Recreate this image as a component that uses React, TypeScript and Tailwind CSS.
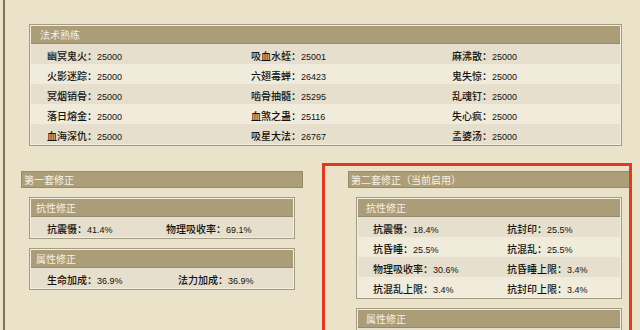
import React from "react";

const CJK = { fontFamily: '"Noto Sans CJK SC", "Liberation Sans", sans-serif' };
const NUM = { fontFamily: '"Liberation Sans", "Noto Sans CJK SC", sans-serif' };

type Cell = [string, string];

function Entry({ c }: { c: Cell }) {
  return (
    <span className="whitespace-nowrap text-[#14120e]">
      <span className="text-[10px] font-medium" style={CJK}>
        {c[0]}：
      </span>
      <span className="text-[9px]" style={NUM}>
        {c[1]}
      </span>
    </span>
  );
}

function Box({
  title,
  rows,
  titlePad,
  rowPad,
  colWidths,
}: {
  title: string;
  rows: Cell[][];
  titlePad: number;
  rowPad: number;
  colWidths: number[];
}) {
  return (
    <div className="border border-[#a19b84] bg-[#f3eee2] p-px">
      <div
        className="h-[18px] flex items-center bg-[#ac9d79] border-b border-[#94896d] text-[10px] text-[#f7f2e4]"
        style={{ ...CJK, paddingLeft: titlePad }}
      >
        {title}
      </div>
      {rows.map((r, i) => (
        <div
          key={i}
          className={`h-[20px] flex items-center ${i % 2 === 0 ? "bg-[#e7dfcd]" : "bg-[#f1ebdc]"}`}
          style={{ paddingLeft: rowPad }}
        >
          {r.map((c, j) => (
            <div key={j} className="shrink-0" style={{ width: colWidths[j] }}>
              <Entry c={c} />
            </div>
          ))}
        </div>
      ))}
    </div>
  );
}

function SectionHeader({ title }: { title: string }) {
  return (
    <div
      className="h-[17px] flex items-center pl-[2px] bg-[#ad9e7a] border border-[#978b6b] text-[10px] text-[#f7f2e4]"
      style={CJK}
    >
      {title}
    </div>
  );
}

export default function App() {
  const skills: Cell[][] = [
    [["幽冥鬼火", "25000"], ["吸血水蛭", "25001"], ["麻沸散", "25000"]],
    [["火影迷踪", "25000"], ["六翅毒蝉", "26423"], ["鬼失惊", "25000"]],
    [["冥烟销骨", "25000"], ["啮骨抽髓", "25295"], ["乱魂钉", "25000"]],
    [["落日熔金", "25000"], ["血煞之蛊", "25116"], ["失心疯", "25000"]],
    [["血海深仇", "25000"], ["吸星大法", "26767"], ["孟婆汤", "25000"]],
  ];

  return (
    <div className="w-[640px] h-[330px] overflow-hidden relative flex bg-[#ebe2ca]">
      <div className="ml-[3px] w-[2px] shrink-0 bg-[#85744c]" />
      <div className="pl-[16px] pt-[24px] w-[625px] shrink-0">
        <div className="px-[8px]">
          <Box
            title="法术熟练"
            rows={skills}
            titlePad={9}
            rowPad={16}
            colWidths={[204, 201, 160]}
          />
        </div>
        <div className="mt-[25px] flex gap-[45px]">
          <div className="w-[282px] shrink-0">
            <SectionHeader title="第一套修正" />
            <div className="px-[8px] pt-[9px] flex flex-col gap-[9px]">
              <Box
                title="抗性修正"
                rows={[[["抗震慑", "41.4%"], ["物理吸收率", "69.1%"]]]}
                titlePad={5}
                rowPad={16}
                colWidths={[119, 120]}
              />
              <Box
                title="属性修正"
                rows={[[["生命加成", "36.9%"], ["法力加成", "36.9%"]]]}
                titlePad={5}
                rowPad={16}
                colWidths={[131, 110]}
              />
            </div>
          </div>
          <div className="w-[282px] shrink-0">
            <SectionHeader title="第二套修正（当前启用）" />
            <div className="px-[8px] pt-[9px] flex flex-col gap-[9px]">
              <Box
                title="抗性修正"
                rows={[
                  [["抗震慑", "18.4%"], ["抗封印", "25.5%"]],
                  [["抗昏睡", "25.5%"], ["抗混乱", "25.5%"]],
                  [["物理吸收率", "30.6%"], ["抗昏睡上限", "3.4%"]],
                  [["抗混乱上限", "3.4%"], ["抗封印上限", "3.4%"]],
                ]}
                titlePad={8}
                rowPad={15}
                colWidths={[134, 110]}
              />
              <Box
                title="属性修正"
                rows={[[]]}
                titlePad={8}
                rowPad={15}
                colWidths={[134, 110]}
              />
            </div>
          </div>
        </div>
      </div>
      <div className="absolute left-[322px] top-[163px] w-[310px] h-[200px] border-[3px] border-[#e2391f] pointer-events-none" />
    </div>
  );
}
